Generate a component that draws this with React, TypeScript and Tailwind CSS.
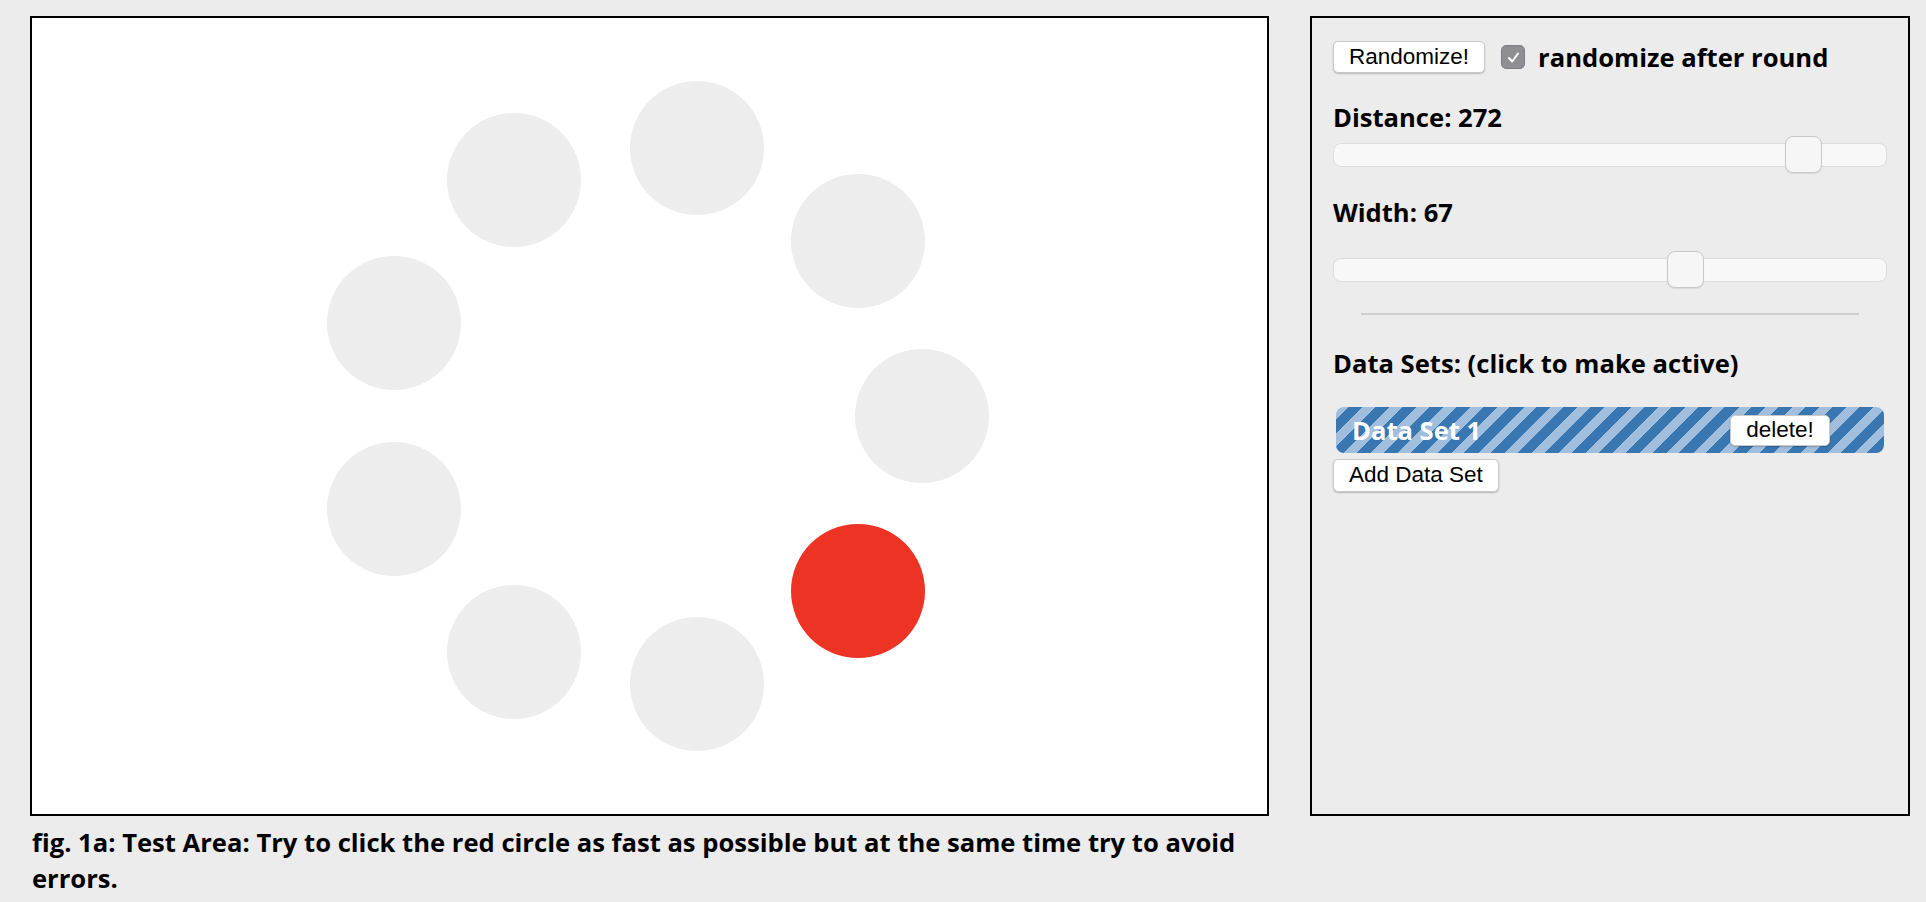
import React from "react";

const CX = 618;
const CY = 398;
const R = 272;
const D = 134;

function Slider({ thumb }: { thumb: number }) {
  return (
    <div className="relative h-[37px] flex items-center">
      <div className="h-[24px] w-full rounded-[8px] border-[1.5px] border-[#dcdcdc] bg-[#f8f8f8]" />
      <div
        className="absolute top-0 h-[37px] w-[37px] rounded-[8px] border-[1.5px] border-[#c8c8c8] bg-[#f6f6f6] shadow-[0_1px_1px_rgba(0,0,0,0.08)]"
        style={{ left: thumb }}
      />
    </div>
  );
}

const btn =
  "bg-white border border-[#c9c9c9] rounded-[5px] px-[15px] text-[22.5px] text-black shadow-[0_1px_1.5px_rgba(0,0,0,0.22)] leading-none flex items-center justify-center [font-family:'Liberation_Sans',Arial,sans-serif]";

export default function App() {
  const circles = Array.from({ length: 9 }, (_, k) => {
    const a = (k * 40 * Math.PI) / 180;
    return { x: CX + R * Math.cos(a), y: CY + R * Math.sin(a), red: k === 1 };
  });
  return (
    <div className="min-h-[902px] bg-[#ececec] [font-family:'Open_Sans',sans-serif] text-black">
      <div className="flex pt-[16px] pl-[30px] gap-[41px]">
        <div className="w-[1239px]">
          <div className="relative h-[800px] border-2 border-black bg-white overflow-hidden">
            {circles.map((c, i) => (
              <div
                key={i}
                className={`absolute rounded-full ${c.red ? "bg-[#ed3324]" : "bg-[#ededed]"}`}
                style={{ left: c.x - D / 2, top: c.y - D / 2, width: D, height: D }}
              />
            ))}
          </div>
          <p className="mt-[9px] pl-[2px] pr-[2px] text-[25.6px] leading-[36px] font-bold">
            fig. 1a: Test Area: Try to click the red circle as fast as possible but at the same time try to avoid errors.
          </p>
        </div>

        <div className="w-[600px] h-[800px] border-2 border-black px-[21px]">
          <div className="mt-[23px] h-[32px] flex items-center">
            <button className={`${btn} h-[32px]`}>Randomize!</button>
            <div className="ml-[16px] h-[24px] w-[24px] rounded-[5px] bg-[#8e8e93] border border-[#7d7d82] flex items-center justify-center">
              <svg width="15" height="15" viewBox="0 0 15 15">
                <path d="M3 8 L6.2 11.5 L12 3.5" fill="none" stroke="white" strokeWidth="2" strokeLinecap="round" strokeLinejoin="round" />
              </svg>
            </div>
            <span className="ml-[13px] text-[25.6px] leading-[35px] font-bold">randomize after round</span>
          </div>

          <div className="mt-[27px] text-[25.6px] leading-[35px] font-bold">Distance: 272</div>
          <div className="mt-[1px]">
            <Slider thumb={452} />
          </div>

          <div className="mt-[22px] text-[25.6px] leading-[35px] font-bold">Width: 67</div>
          <div className="mt-[21px]">
            <Slider thumb={334} />
          </div>

          <div className="mt-[25px] mx-auto w-[90%] h-[2px] bg-[#cfcfcf]" />

          <div className="mt-[31px] text-[25.6px] leading-[35px] font-bold">Data Sets: (click to make active)</div>

          <div className="mt-[26px] mx-[3px] h-[46px] rounded-[8px] flex items-center justify-between pl-[16px] pr-[54px] bg-[repeating-linear-gradient(135deg,#a1bfdc_0px,#a1bfdc_9px,#3877b2_9px,#3877b2_19px)]">
            <span className="text-white text-[25.6px] leading-[35px] font-bold">Data Set 1</span>
            <button className={`${btn} h-[31px] w-[100px] px-0`}>delete!</button>
          </div>

          <div className="mt-[6px] flex">
            <button className={`${btn} h-[33px]`}>Add Data Set</button>
          </div>
        </div>
      </div>
    </div>
  );
}
